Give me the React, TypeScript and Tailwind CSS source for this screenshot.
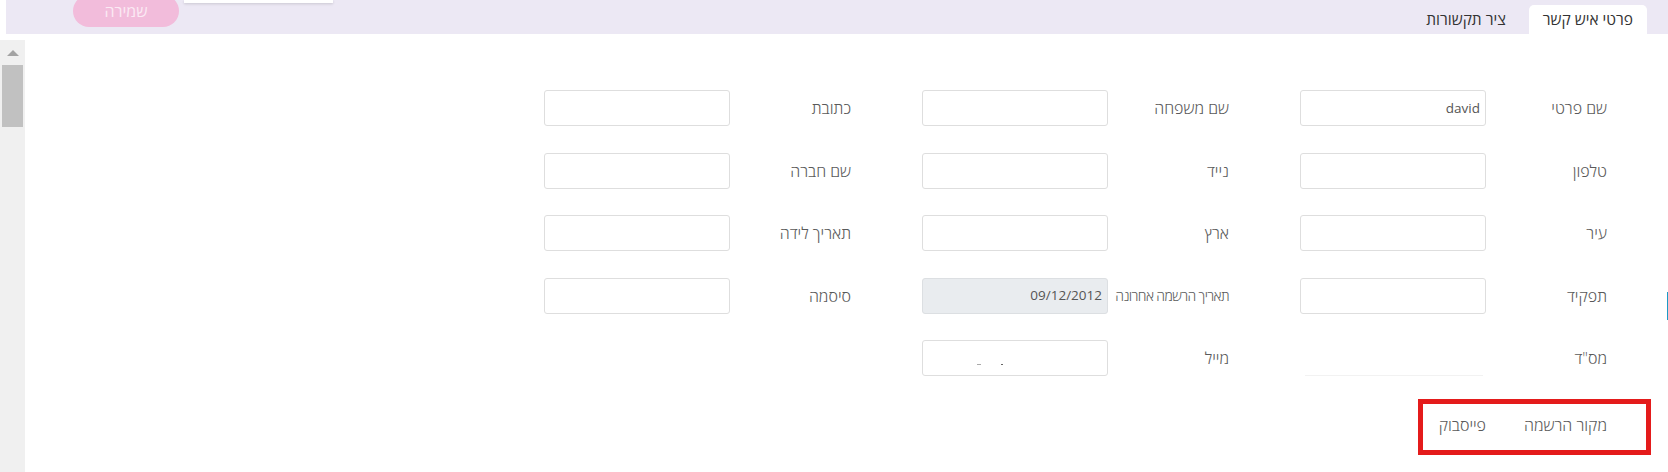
import React from "react";

const font = "font-['Open_Sans','Liberation_Sans',sans-serif]";

interface FieldProps {
  label?: string;
  value?: string;
  kind?: "input" | "disabled" | "plain" | "blank" | "email" | "text";
  tight?: boolean;
}

const Field: React.FC<FieldProps> = ({ label, value, kind = "input", tight }) => {
  return (
    <div className="flex items-center">
      <div
        className={
          tight
            ? "w-[121px] text-right text-[14px] tracking-[-0.6px] text-[#5a5a5a] font-light whitespace-nowrap"
            : "w-[121px] text-right text-[16px] text-[#5a5a5a] font-light whitespace-nowrap"
        }
      >
        {label}
      </div>
      {kind === "input" && (
        <div className="w-[186px] h-[36px] border border-[#dedede] rounded-[3px] bg-white flex items-center px-[5px] text-[13.5px] text-[#555]">
          {value}
        </div>
      )}
      {kind === "disabled" && (
        <div className="w-[186px] h-[36px] border border-[#dcdfe2] rounded-[3px] bg-[#e9ecef] flex items-center px-[5px] text-[13.5px] text-[#555]">
          {value}
        </div>
      )}
      {kind === "plain" && (
        <div className="w-[186px] h-[36px] flex items-end">
          <div className="w-[178px] mr-[3px] h-px bg-[#f2f2f2]" />
        </div>
      )}
      {kind === "email" && (
        <div
          dir="ltr"
          className="w-[186px] h-[36px] border border-[#dedede] rounded-[3px] bg-white flex items-end pl-[54px] pb-[10px] gap-[20px]"
        >
          <span className="w-[4px] h-px bg-[#aaa]" />
          <span className="w-[2px] h-px bg-[#666]" />
        </div>
      )}
      {kind === "text" && (
        <div className="w-[186px] text-right text-[16px] text-[#5a5a5a] font-light">{value}</div>
      )}
      {kind === "blank" && <div className="w-[186px] h-[36px]" />}
    </div>
  );
};

const App: React.FC = () => {
  return (
    <div className={`relative w-[1668px] h-[472px] overflow-hidden bg-white ${font}`}>
      {/* top bar */}
      <div className="ml-[6px] h-[34px] bg-[#ece8f4] flex items-start">
        <button className="ml-[67px] -mt-[5px] h-[32px] w-[106px] rounded-full bg-[#f2bcdb] text-[#fbeaf4] text-[16px]">
          שמירה
        </button>
        <div dir="rtl" className="ml-auto mr-[21px] mt-[5px] flex gap-[9px] text-[15.5px] text-[#333]">
          <div className="h-[29px] px-[14px] bg-white rounded-t-[5px] flex items-center">פרטי איש קשר</div>
          <div className="h-[29px] px-[14px] flex items-center">ציר תקשורות</div>
        </div>
      </div>

      {/* popup edge */}
      <div className="absolute left-[184px] top-0 w-[149px] h-[3px] bg-white shadow-[0_1px_3px_rgba(0,0,0,0.15)]" />

      <div className="flex h-[438px]">
        {/* scrollbar */}
        <div className="mt-[6px] w-[25px] bg-[#f0f0f0] flex flex-col items-center">
          <div className="mt-[10px] w-0 h-0 border-l-[6px] border-r-[6px] border-b-[6px] border-l-transparent border-r-transparent border-b-[#a3a3a3]" />
          <div className="mt-[9px] w-[21px] h-[62px] bg-[#c1c1c1]" />
        </div>

        {/* form */}
        <div dir="rtl" className="flex-1 pr-[61px] pt-[56px] flex flex-col gap-[26.5px]">
          <div className="flex gap-[71px]">
            <Field label="שם פרטי" value="david" />
            <Field label="שם משפחה" />
            <Field label="כתובת" />
          </div>
          <div className="flex gap-[71px]">
            <Field label="טלפון" />
            <Field label="נייד" />
            <Field label="שם חברה" />
          </div>
          <div className="flex gap-[71px]">
            <Field label="עיר" />
            <Field label="ארץ" />
            <Field label="תאריך לידה" />
          </div>
          <div className="flex gap-[71px]">
            <Field label="תפקיד" />
            <Field label="תאריך הרשמה אחרונה" kind="disabled" value="09/12/2012" tight />
            <Field label="סיסמה" />
          </div>
          <div className="flex gap-[71px]">
            <Field label='מס"ד' kind="plain" />
            <Field label="מייל" kind="email" />
          </div>
          <div className="flex gap-[71px] h-[36px] mt-[4px]">
            <Field label="מקור הרשמה" kind="text" value="פייסבוק" />
          </div>
        </div>
      </div>

      {/* side marker */}
      <div className="absolute right-0 top-[292px] w-px h-[28px] bg-[#1b9ac6]" />

      {/* highlight annotation */}
      <div className="absolute left-[1418px] top-[399px] w-[233px] h-[56px] border-[5px] border-[#e41b1b]" />
    </div>
  );
};

export default App;
